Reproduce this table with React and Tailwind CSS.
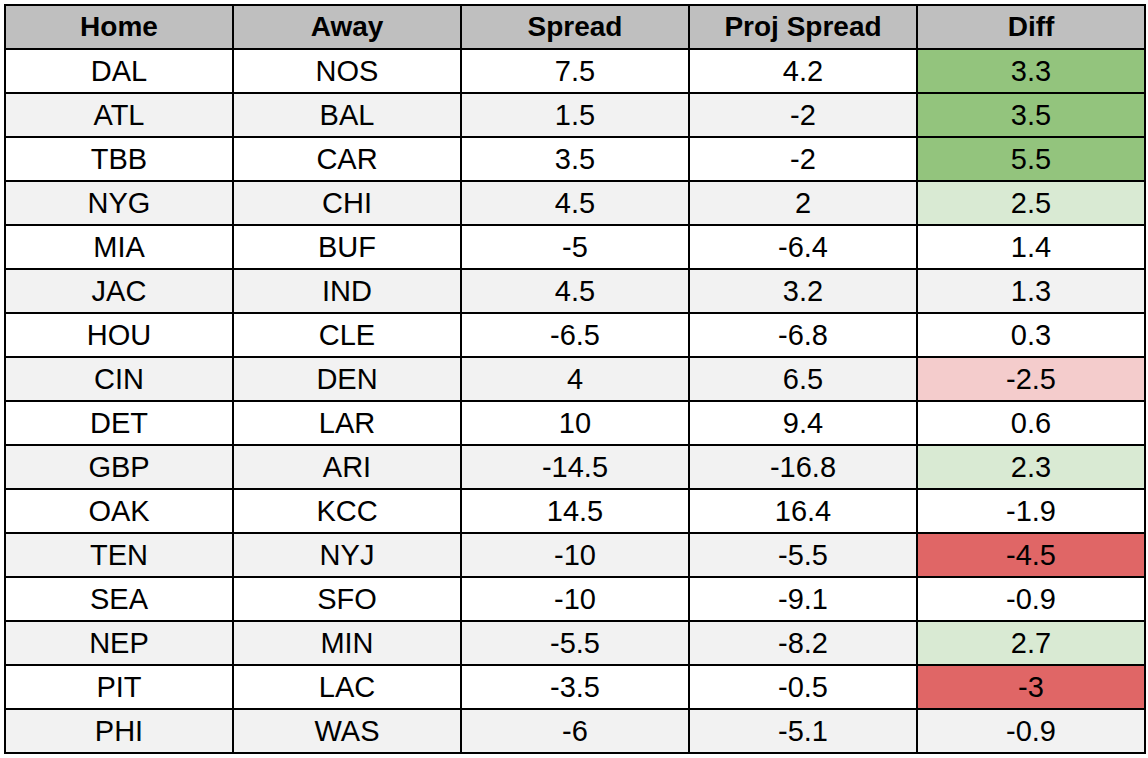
import React from 'react';

const rows = [
  ['DAL', 'NOS', '7.5', '4.2', '3.3', 'dg'],
  ['ATL', 'BAL', '1.5', '-2', '3.5', 'dg'],
  ['TBB', 'CAR', '3.5', '-2', '5.5', 'dg'],
  ['NYG', 'CHI', '4.5', '2', '2.5', 'lg'],
  ['MIA', 'BUF', '-5', '-6.4', '1.4', ''],
  ['JAC', 'IND', '4.5', '3.2', '1.3', ''],
  ['HOU', 'CLE', '-6.5', '-6.8', '0.3', ''],
  ['CIN', 'DEN', '4', '6.5', '-2.5', 'lr'],
  ['DET', 'LAR', '10', '9.4', '0.6', ''],
  ['GBP', 'ARI', '-14.5', '-16.8', '2.3', 'lg'],
  ['OAK', 'KCC', '14.5', '16.4', '-1.9', ''],
  ['TEN', 'NYJ', '-10', '-5.5', '-4.5', 'dr'],
  ['SEA', 'SFO', '-10', '-9.1', '-0.9', ''],
  ['NEP', 'MIN', '-5.5', '-8.2', '2.7', 'lg'],
  ['PIT', 'LAC', '-3.5', '-0.5', '-3', 'dr'],
  ['PHI', 'WAS', '-6', '-5.1', '-0.9', ''],
];

const diffBg = {
  dg: 'bg-[#93c47d]',
  lg: 'bg-[#d9ead3]',
  lr: 'bg-[#f4cccc]',
  dr: 'bg-[#e06666]',
};

const headers = ['Home', 'Away', 'Spread', 'Proj Spread', 'Diff'];

export default function App() {
  return (
    <div className="w-[1148px] h-[758px] bg-white pl-[4px] pt-[4px] font-['Liberation_Sans',Arial,sans-serif] text-black">
      <div className="grid grid-cols-[repeat(5,226px)] auto-rows-[42px] gap-[2px] p-[2px] bg-black w-[1142px]">
        {headers.map((h) => (
          <div key={h} className="bg-[#bfbfbf] flex items-center justify-center text-[28px] leading-none font-bold">
            {h}
          </div>
        ))}
        {rows.map((r, i) => {
          const base = i % 2 === 1 ? 'bg-[#f2f2f2]' : 'bg-white';
          return (
            <React.Fragment key={i}>
              {r.slice(0, 5).map((v, j) => (
                <div
                  key={j}
                  className={`flex items-center justify-center text-[29px] leading-none pt-[1px] ${j === 4 && r[5] ? diffBg[r[5]] : base}`}
                >
                  {v}
                </div>
              ))}
            </React.Fragment>
          );
        })}
      </div>
    </div>
  );
}
